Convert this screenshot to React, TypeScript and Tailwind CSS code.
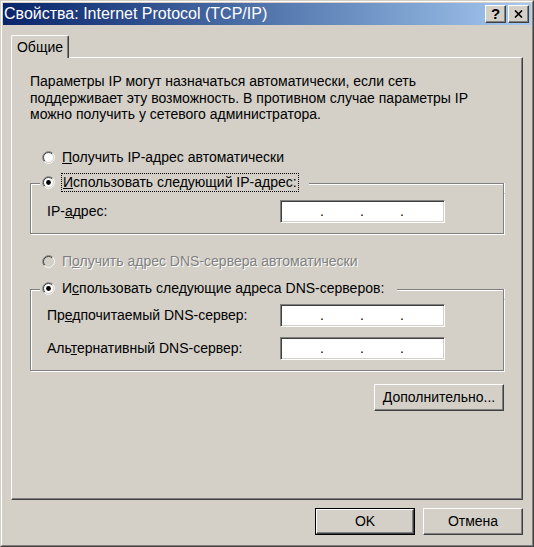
const raised =
  'border border-t-white border-l-white border-r-[#404040] border-b-[#404040] shadow-[inset_-1px_-1px_0_#808080] bg-[#d4d0c8]'

const Radio = ({ checked = false, disabled = false }: { checked?: boolean; disabled?: boolean }) => (
  <svg width="13" height="13" viewBox="0 0 13 13" className="shrink-0">
    <circle cx="6.5" cy="6.5" r="5" fill={disabled ? '#d4d0c8' : '#fff'} />
    <path d="M2.26 10.74A6 6 0 0 1 10.74 2.26" fill="none" stroke="#808080" />
    <path d="M10.74 2.26A6 6 0 0 1 2.26 10.74" fill="none" stroke="#fff" />
    <path d="M2.96 10.04A5 5 0 0 1 10.04 2.96" fill="none" stroke="#404040" />
    <path d="M10.04 2.96A5 5 0 0 1 2.96 10.04" fill="none" stroke="#d4d0c8" />
    {checked && <circle cx="6.5" cy="6.5" r="2.4" fill="#000" />}
  </svg>
)

const IpField = () => (
  <div className="w-[165px] h-[23px] bg-white border border-t-[#808080] border-l-[#808080] border-r-white border-b-white shadow-[inset_1px_1px_0_#404040,inset_-1px_-1px_0_#d4d0c8] flex items-center">
    <span className="w-[37px]" />
    <span className="w-[8px] text-center">.</span>
    <span className="w-[32px]" />
    <span className="w-[8px] text-center">.</span>
    <span className="w-[32px]" />
    <span className="w-[8px] text-center">.</span>
  </div>
)

const Group = ({ legend, children }: { legend: React.ReactNode; children: React.ReactNode }) => (
  <div className="flex flex-col">
    <div className="flex h-[20px]">
      <div className="w-[10px] h-[10px] self-end border-l border-t border-[#808080] shadow-[inset_1px_1px_0_#fff]" />
      <div className="flex items-center pl-[2px] pr-[10px]">{legend}</div>
      <div className="flex-1 h-[10px] self-end border-t border-r border-[#808080] shadow-[inset_0_1px_0_#fff,1px_0_0_#fff]" />
    </div>
    <div className="border-x border-b border-[#808080] shadow-[inset_1px_0_0_#fff,1px_1px_0_#fff]">
      {children}
    </div>
  </div>
)

const App = () => (
  <div className="w-[534px] h-[547px] bg-[#d4d0c8] border border-t-[#d4d0c8] border-l-[#d4d0c8] border-r-[#404040] border-b-[#404040] font-['Liberation_Sans',Arial,sans-serif] text-[14px] text-black">
    <div className="h-full flex flex-col p-px border border-t-white border-l-white border-r-[#808080] border-b-[#808080]">
      {/* title bar */}
      <div className="h-[22px] shrink-0 flex items-center bg-linear-to-r from-[#0a246a] to-[#a6caf0] pl-[1px] pr-[2px]">
        <span className="flex-1 text-white text-[16px] whitespace-nowrap">
          Свойства: Internet Protocol (TCP/IP)
        </span>
        <div className={`w-[21px] h-[18px] flex items-center justify-center font-bold text-[15px] ${raised}`}>?</div>
        <div className={`ml-[2px] w-[21px] h-[18px] flex items-center justify-center ${raised}`}>
          <svg width="9" height="8" viewBox="0 0 9 8">
            <path d="M1 0.5L8 7.5M8 0.5L1 7.5" stroke="#000" strokeWidth="1.6" />
          </svg>
        </div>
      </div>

      <div className="flex-1 flex flex-col px-[8px] pt-[10px]">
        {/* tab */}
        <div className="flex">
          <div className="relative z-10 -mb-px h-[23px] w-[58px] flex items-center justify-center bg-[#d4d0c8] border-l border-t border-r border-l-white border-t-white border-r-[#404040] rounded-t-[2px] shadow-[inset_-1px_0_0_#808080]">
            Общие
          </div>
        </div>

        {/* panel */}
        <div className="h-[443px] flex flex-col pl-[18px] pr-[18px] pt-[15px] border border-t-white border-l-white border-r-[#404040] border-b-[#404040] shadow-[inset_-1px_-1px_0_#808080]">
          <p className="leading-[16.5px] whitespace-nowrap">
            Параметры IP могут назначаться автоматически, если сеть
            <br />
            поддерживает эту возможность. В противном случае параметры IP
            <br />
            можно получить у сетевого администратора.
          </p>

          <div className="mt-[25px] h-[20px] flex items-center pl-[12px]">
            <Radio />
            <span className="ml-[7px] whitespace-nowrap">
              <u>П</u>олучить IP-адрес автоматически
            </span>
          </div>

          <div className="mt-[5px]">
            <Group
              legend={
                <>
                  <Radio checked />
                  <span className="ml-[6px] px-px leading-[17px] border border-dotted border-black whitespace-nowrap">
                    <u>И</u>спользовать следующий IP-адрес:
                  </span>
                </>
              }
            >
              <div className="flex items-center pl-[16px] pt-[7px] pb-[10px]">
                <span className="w-[233px]">
                  IP-<u>а</u>дрес:
                </span>
                <IpField />
              </div>
            </Group>
          </div>

          <div className="mt-[18px] h-[20px] flex items-center pl-[12px]">
            <Radio disabled />
            <span className="ml-[7px] whitespace-nowrap text-[#808080] [text-shadow:1px_1px_0_#fff]">
              П<u>о</u>лучить адрес DNS-сервера автоматически
            </span>
          </div>

          <div className="mt-[7px]">
            <Group
              legend={
                <>
                  <Radio checked />
                  <span className="ml-[7px] pr-[3px] whitespace-nowrap">
                    И<u>с</u>пользовать следующие адреса DNS-серверов:
                  </span>
                </>
              }
            >
              <div className="flex flex-col gap-[10px] pl-[16px] pt-[5px] pb-[10px]">
                <div className="flex items-center">
                  <span className="w-[233px]">
                    Пр<u>е</u>дпочитаемый DNS-сервер:
                  </span>
                  <IpField />
                </div>
                <div className="flex items-center">
                  <span className="w-[233px]">
                    Аль<u>т</u>ернативный DNS-сервер:
                  </span>
                  <IpField />
                </div>
              </div>
            </Group>
          </div>

          <div className="mt-[13px] flex justify-end">
            <button className={`w-[130px] h-[27px] flex items-center justify-center ${raised}`}>
              <span>
                <u>Д</u>ополнительно...
              </span>
            </button>
          </div>
        </div>

        {/* dialog buttons */}
        <div className="mt-[8px] flex justify-end gap-[8px]">
          <button className="w-[100px] h-[27px] border border-black p-0">
            <div className={`h-full flex items-center justify-center ${raised}`}>OK</div>
          </button>
          <button className={`w-[100px] h-[27px] flex items-center justify-center ${raised}`}>Отмена</button>
        </div>
      </div>
    </div>
  </div>
)

export default App
